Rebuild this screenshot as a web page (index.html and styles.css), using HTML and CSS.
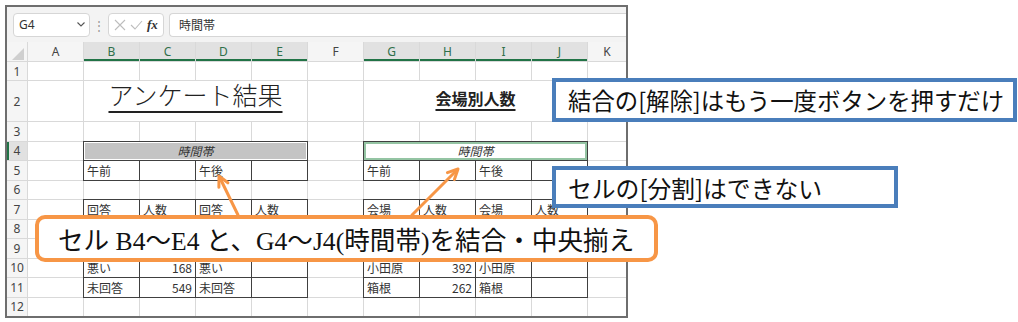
FILE: index.html
```html
<!DOCTYPE html>
<html>
  <head>
    <meta charset="utf-8">
    <title>セルの結合</title>
    <link rel="stylesheet" href="styles.css">
  </head>
  <body>
    <div class="window">
      <div class="fbar">
        <div class="namebox">
          <span>G4</span>
          <svg class="chev" width="8" height="5" viewBox="0 0 8 5"><path d="M0.5 0.5 L4 4 L7.5 0.5" fill="none" stroke="#555" stroke-width="1.1"/></svg>
        </div>
        <span class="dots">⋮</span>
        <div class="fxbox">
          <svg width="12" height="12" viewBox="0 0 12 12"><path d="M1 1 L11 11 M11 1 L1 11" stroke="#bdbdbd" stroke-width="1.1"/></svg>
          <svg width="13" height="12" viewBox="0 0 13 12"><path d="M1 6 L5 10 L12 2" fill="none" stroke="#bdbdbd" stroke-width="1.1"/></svg>
          <i>fx</i>
        </div>
        <div class="finput">時間帯</div>
      </div>

      <div class="sheet">
        <div class="corner"></div>
        <div class="ch">A</div><div class="ch sel">B</div><div class="ch sel">C</div><div class="ch sel">D</div><div class="ch sel">E</div>
        <div class="ch">F</div><div class="ch sel">G</div><div class="ch sel">H</div><div class="ch sel">I</div><div class="ch sel">J</div><div class="ch">K</div>

        <div class="rh">1</div>
        <div></div><div></div><div></div><div></div><div></div><div></div><div></div><div></div><div></div><div></div><div></div>

        <div class="rh">2</div>
        <div></div><div class="title">アンケート結果</div><div></div><div class="sub">会場別人数</div><div></div>

        <div class="rh">3</div>
        <div></div><div></div><div></div><div></div><div></div><div></div><div></div><div></div><div></div><div></div><div></div>

        <div class="rh sel">4</div>
        <div></div><div class="t merged gray">時間帯</div><div></div><div class="t merged picked">時間帯</div><div></div>

        <div class="rh">5</div>
        <div></div><div class="t">午前</div><div class="t"></div><div class="t">午後</div><div class="t"></div>
        <div></div><div class="t">午前</div><div class="t"></div><div class="t">午後</div><div class="t"></div><div></div>

        <div class="rh">6</div>
        <div></div><div></div><div></div><div></div><div></div><div></div><div></div><div></div><div></div><div></div><div></div>

        <div class="rh">7</div>
        <div></div><div class="t">回答</div><div class="t">人数</div><div class="t">回答</div><div class="t">人数</div>
        <div></div><div class="t">会場</div><div class="t">人数</div><div class="t">会場</div><div class="t">人数</div><div></div>

        <!-- rows 8 and 9 sit under the orange note -->
        <div class="rh">8</div>
        <div></div><div class="t"></div><div class="t"></div><div class="t"></div><div class="t"></div>
        <div></div><div class="t"></div><div class="t"></div><div class="t"></div><div class="t"></div><div></div>

        <div class="rh">9</div>
        <div></div><div class="t"></div><div class="t"></div><div class="t"></div><div class="t"></div>
        <div></div><div class="t"></div><div class="t"></div><div class="t"></div><div class="t"></div><div></div>

        <div class="rh">10</div>
        <div></div><div class="t">悪い</div><div class="t num">168</div><div class="t">悪い</div><div class="t"></div>
        <div></div><div class="t">小田原</div><div class="t num">392</div><div class="t">小田原</div><div class="t"></div><div></div>

        <div class="rh">11</div>
        <div></div><div class="t">未回答</div><div class="t num">549</div><div class="t">未回答</div><div class="t"></div>
        <div></div><div class="t">箱根</div><div class="t num">262</div><div class="t">箱根</div><div class="t"></div><div></div>

        <div class="rh">12</div>
        <div></div><div></div><div></div><div></div><div></div><div></div><div></div><div></div><div></div><div></div><div></div>
      </div>
    </div>

    <!-- arrows from the orange note to the merged cells -->
    <svg class="arrows" width="1018" height="322" viewBox="0 0 1018 322">
      <g fill="none" stroke="#f79646" stroke-width="3" stroke-linecap="round" stroke-linejoin="round">
        <path d="M238 215 L219.5 177"/>
        <path d="M227.9 182.8 L219 176 L218.9 187.2"/>
        <path d="M412 215 L457 170"/>
        <path d="M454.4 179.6 L458 169 L447.4 172.6"/>
      </g>
    </svg>

    <div class="note blue n1">結合の[解除]はもう一度ボタンを押すだけ</div>
    <div class="note blue n2">セルの[分割]はできない</div>
    <div class="note orange">セル B4～E4 と、G4～J4(時間帯)を結合・中央揃え</div>
  </body>
</html>
```

FILE: styles.css
```css
body { margin: 0; background: #fff; font-family: "Noto Sans CJK JP", sans-serif; }

.window { margin: 5px 0 0 5px; width: 623px; height: 313px; box-sizing: border-box; border: 2px solid #6e6e6e; background: #f3f3f3; overflow: hidden; }

.fbar { height: 35px; display: flex; align-items: center; padding-left: 6px; }
.namebox { width: 77px; height: 24px; box-sizing: border-box; background: #fff; border: 1px solid #d6d6d6; border-radius: 4px; display: flex; align-items: center; justify-content: space-between; padding: 0 4px 0 5px; font: 12px "Noto Sans", sans-serif; color: #333; }
.dots { width: 18px; text-align: center; color: #999; font-size: 12px; }
.fxbox { width: 56px; height: 24px; box-sizing: border-box; background: #fff; border: 1px solid #d6d6d6; border-radius: 4px; display: flex; align-items: center; gap: 4px; padding-left: 5px; }
.fxbox i { font: italic bold 13px "Liberation Serif", serif; color: #333; }
.finput { flex: 1; height: 24px; margin-left: 5px; box-sizing: border-box; background: #fff; border: 1px solid #d6d6d6; border-right: none; border-radius: 4px 0 0 4px; display: flex; align-items: center; padding-left: 9px; font-size: 12px; color: #333; }

.sheet { display: grid; grid-template-columns: 20px repeat(10, 55px) 1fr; grid-template-rows: 19px 18px 40px repeat(10, 18.5px); gap: 1px; background: #d9d9d9; }
.sheet > div { background: #fff; display: flex; align-items: center; padding: 0 3px; font-size: 12px; color: #333; white-space: nowrap; overflow: hidden; min-width: 0; }

.corner { background: #f5f5f5 !important; }
.corner::after { content: ""; margin: auto 0 1px auto; border-left: 12px solid transparent; border-bottom: 12px solid #cfcfcf; }
.ch, .rh { background: #f5f5f5 !important; justify-content: center; font-family: "Noto Sans", sans-serif !important; color: #444 !important; padding: 0 !important; }
.ch.sel { background: #e1e1e1 !important; color: #2f6f4a !important; box-shadow: inset 0 -2px #217346; }
.rh.sel { background: #e1e1e1 !important; box-shadow: inset 2px 0 #217346; }

.title { grid-column: span 4; justify-content: center; align-items: flex-end !important; overflow: visible !important; padding-bottom: 12px !important; font-size: 25px !important; font-weight: 300; line-height: 1.2; color: #222 !important; text-decoration: underline; text-decoration-thickness: 1.5px; text-underline-offset: 6px; }
.sub { grid-column: span 4; justify-content: center; align-items: flex-end !important; overflow: visible !important; padding-bottom: 13px !important; font-size: 16px !important; font-weight: bold; line-height: 1.2; color: #222 !important; text-decoration: underline; text-decoration-thickness: 1.5px; text-underline-offset: 4px; }

.t { outline: 1px solid #404040; }
.num { justify-content: flex-end; }
.merged { grid-column: span 4; justify-content: center; font-style: italic; }
.gray { background: #c4c4c4 !important; box-shadow: inset 0 0 0 1px #fff; }
.picked { box-shadow: inset 0 0 0 2px #94c4a3; }

.arrows { position: absolute; left: 0; top: 0; pointer-events: none; }

.note { position: absolute; box-sizing: border-box; background: #fff; display: flex; align-items: center; white-space: nowrap; color: #111; }
.blue { border: 4px solid #4a7ebb; font-size: 23.4px; padding-left: 12px; }
.n1 { left: 552px; top: 78px; width: 465px; height: 44px; }
.n2 { left: 552px; top: 166px; width: 346px; height: 42px; font-size: 23.8px; }
.orange { left: 35px; top: 215px; width: 623px; height: 47px; border: 4px solid #f79646; border-radius: 10px; padding-left: 19px; font-family: "Liberation Serif", "Noto Sans CJK JP", serif; font-size: 25.6px; }
```
